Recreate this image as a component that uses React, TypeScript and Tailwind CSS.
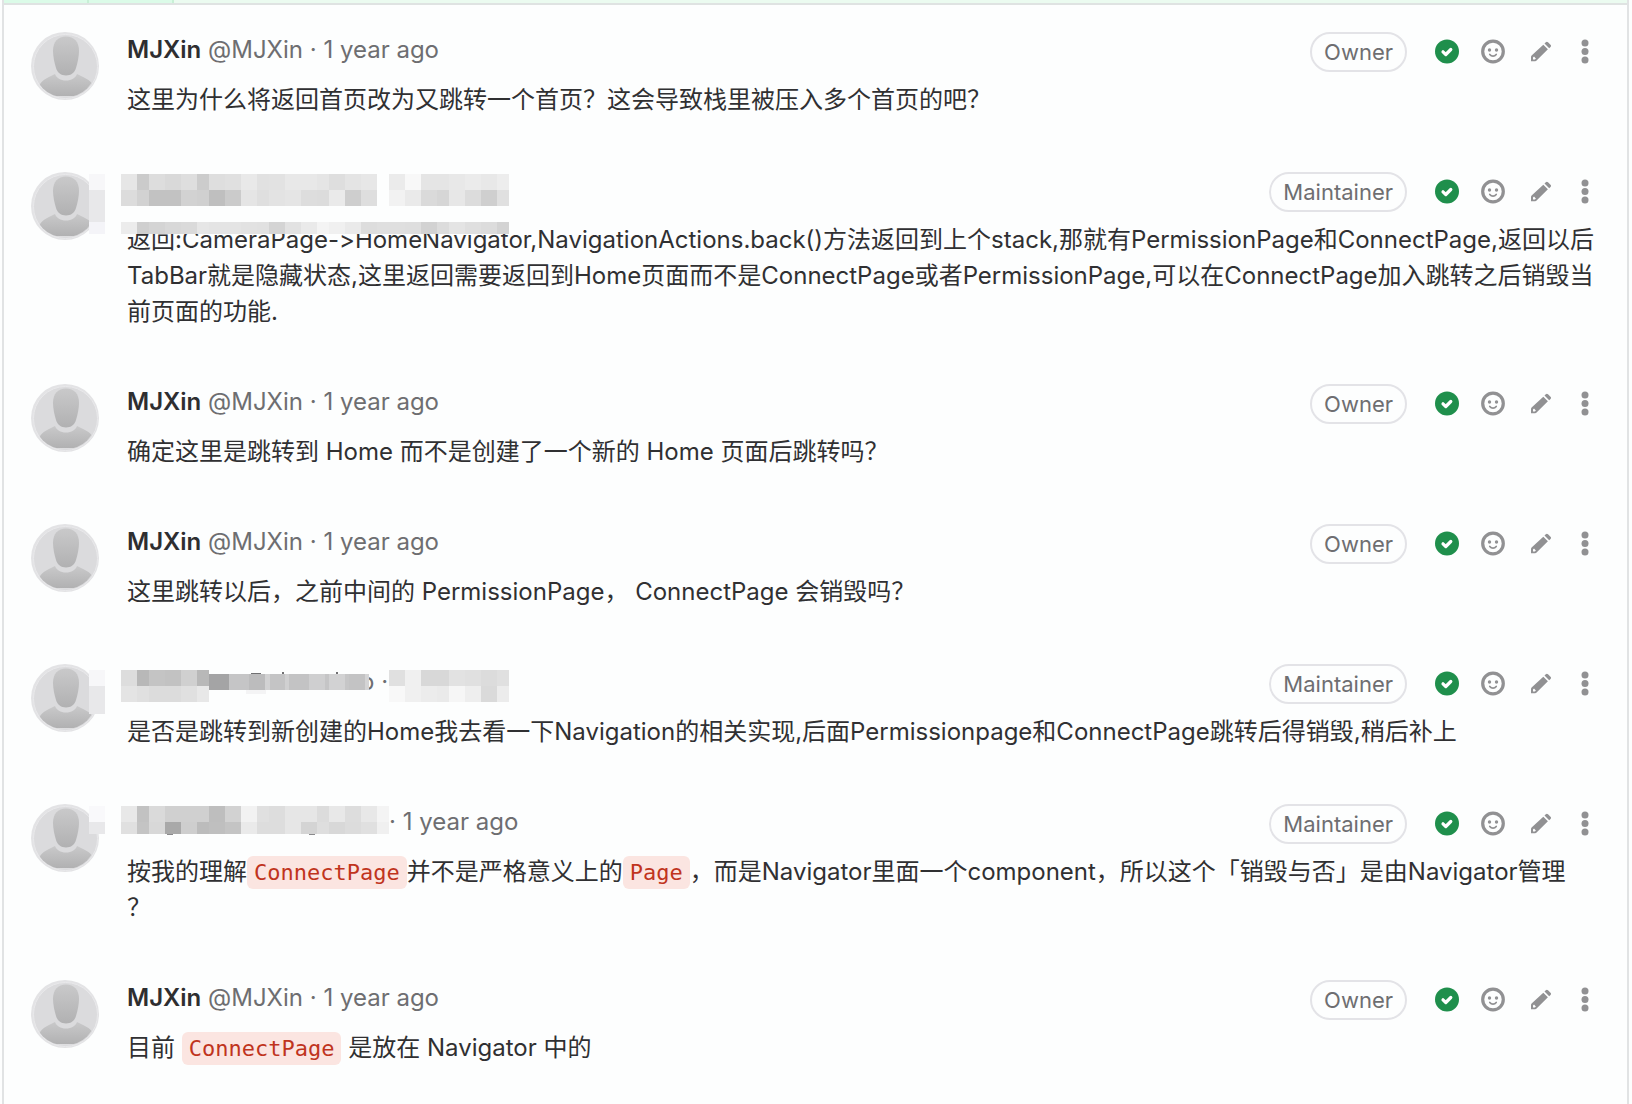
import type { ReactNode } from "react";

type Block = [x: number, y: number, w: number, h: number, fill: string];

/* Column edges shared by all pixelated strips, relative to the avatar's left edge. */
const LEFT_EDGES = [90, 106, 118, 134, 150, 166, 178, 194, 210, 226, 238, 254, 270, 286, 298, 314, 330, 346, 358];
const RIGHT_EDGES = [358, 374, 390, 406, 418, 434, 450, 466, 478];
const ALL_EDGES = [...LEFT_EDGES, ...RIGHT_EDGES.slice(1)];

function strip(edges: number[], y: number, h: number, greys: string): Block[] {
  return greys.split(" ").map((g, i): Block => [edges[i], y, edges[i + 1] - edges[i], h, `#${g}${g}${g}`]);
}

const MASK_A: Block[] = [
  [58, 2, 16, 16, "#f7f7f9"],
  [58, 18, 16, 32, "#e8e8ea"],
  [58, 50, 16, 12, "#f4f4f8"],
  ...strip(LEFT_EDGES, 2, 16, "e6 cb dd d9 de cc de e0 e9 e1 e2 e8 e8 e5 de e4 e7"),
  ...strip(LEFT_EDGES, 18, 16, "dc d2 c2 c2 d2 d0 bf cb e5 df e3 e5 dd dc ea ce de"),
  ...strip(RIGHT_EDGES, 2, 16, "eb f8 e5 e5 e8 eb e8 ed"),
  ...strip(RIGHT_EDGES, 18, 16, "f2 ea da d6 e7 dc cf e0"),
  [90, 34, 388, 16, "#fdfefe"],
  ...strip(ALL_EDGES, 50, 12, "ec cf d4 d8 da e6 e4 e4 e2 e1 d4 e2 ea f4 f0 ea dd df df de d2 dc e4 df dc d3"),
];

const MASK_B: Block[] = [
  [58, 6, 16, 16, "#f7f7f9"],
  [58, 22, 16, 28, "#e8e8ea"],
  ...strip(LEFT_EDGES, 6, 16, "dd b8 c4 c2 d0 b8"),
  ...strip(LEFT_EDGES, 22, 16, "e4 e0 dc dc e0 e8"),
  [178, 10, 20, 16, "#a4a4a5"],
  [198, 10, 20, 16, "#c5c5c6"],
  [218, 10, 16, 16, "#bcbcbd"],
  [234, 10, 5, 16, "#d2d2d3"],
  [239, 10, 15, 16, "#c4c4c5"],
  [254, 10, 4, 16, "#d0d0d1"],
  [258, 10, 20, 16, "#c3c3c4"],
  [278, 10, 16, 16, "#cfcfd0"],
  [294, 10, 4, 16, "#c5c5c6"],
  [298, 10, 16, 16, "#d2d2d3"],
  [314, 10, 4, 16, "#c6c6c7"],
  [318, 10, 16, 16, "#c3c3c4"],
  [334, 10, 4, 16, "#d4d4d5"],
  [215, 26, 20, 4, "#f4f4f5"],
  [220, 9, 10, 1, "#707072"],
  [251, 8, 2, 2, "#707072"],
  [305, 8, 2, 2, "#707072"],
  ...strip(RIGHT_EDGES, 6, 16, "e0 f0 d8 d8 e2 e0 dc e0"),
  ...strip(RIGHT_EDGES, 22, 16, "f8 f0 ec ea f6 ee da ec"),
];

const MASK_C: Block[] = [
  [58, 2, 16, 16, "#f9f9fb"],
  [58, 18, 16, 12, "#e8e8ea"],
  ...strip(LEFT_EDGES, 2, 16, "e8 c2 da d0 d0 d0 be d2 f2 e0 dd e6 e6 dc e8 dd e8 f4"),
  ...strip(LEFT_EDGES, 18, 12, "e0 c4 d8 a9 ce bc bf c4 ea dd dd e6 d4 de d8 dc e0 f0"),
  [136, 30, 6, 1, "#8a8a8c"],
  [278, 30, 6, 1, "#8a8a8c"],
];

function Mask({ blocks }: { blocks: Block[] }) {
  return (
    <svg
      aria-hidden="true"
      className="pointer-events-none absolute top-0 left-0"
      width="480"
      height="64"
      viewBox="0 0 480 64"
      shapeRendering="crispEdges"
    >
      {blocks.map(([x, y, w, h, fill], i) => (
        <rect key={i} x={x} y={y} width={w} height={h} fill={fill} />
      ))}
    </svg>
  );
}

function Avatar() {
  return (
    <svg className="size-[68px] shrink-0" viewBox="0 0 68 68" role="img" aria-label="avatar">
      <defs>
        <linearGradient id="figure" x1="0" y1="0" x2="0" y2="1">
          <stop offset="0" stopColor="#c9c9ca" />
          <stop offset="1" stopColor="#b1b1b2" />
        </linearGradient>
        <clipPath id="disc">
          <circle cx="34" cy="34" r="31.5" />
        </clipPath>
      </defs>
      <circle cx="34" cy="34" r="34" fill="#e3e3e5" />
      <circle cx="34.5" cy="34.5" r="32" fill="#dbdbdd" stroke="#e9e9eb" strokeWidth="1" />
      <g clipPath="url(#disc)">
        <path d="M9 53c0-3 5-6.500 15-11 1.500 4 5.500 6.500 11 6.500S44.500 46 46 42c10 4.500 15.500 8 15.500 11v11H9z" fill="url(#figure)" />
        <rect x="0" y="64" width="68" height="4" fill="#dedee0" />
      </g>
      <path
        d="M35 4.500c8 0 13 5.500 13 14 0 6-1.500 12.500-3 17.500-1.500 4.800-5 7.500-10 7.500s-8.500-2.700-10-7.500c-1.500-5-3-11.500-3-17.500 0-8.500 5-14 13-14z"
        fill="url(#figure)"
      />
    </svg>
  );
}

function IconButton({ label, children }: { label: string; children: ReactNode }) {
  return (
    <button type="button" aria-label={label} className="size-7 text-[#919193]">
      <svg className="size-7" viewBox="0 0 28 28" fill="currentColor" aria-hidden="true">
        {children}
      </svg>
    </button>
  );
}

function Actions({ role }: { role: string }) {
  return (
    <div className="flex h-10 shrink-0 items-center gap-[18px]">
      <span className="mr-2 flex h-10 items-center rounded-full border-2 border-[#e3e3e7] px-3 text-[22px] text-[#6e6e71]">
        {role}
      </span>
      <IconButton label="Resolved">
        <circle cx="14" cy="13.500" r="12" fill="#1f8f4c" />
        <path d="M10 13.800l2.800 2.700 5-5" fill="none" stroke="#fff" strokeWidth="3.200" strokeLinecap="round" strokeLinejoin="round" />
      </IconButton>
      <IconButton label="Add reaction">
        <circle cx="14" cy="13.500" r="10.300" fill="none" stroke="currentColor" strokeWidth="3.200" />
        <circle cx="10.500" cy="12" r="1.700" />
        <circle cx="17.500" cy="12" r="1.700" />
        <path d="M10.800 16.500c1.700 2.200 4.700 2.200 6.400 0" fill="none" stroke="currentColor" strokeWidth="1.700" strokeLinecap="round" />
      </IconButton>
      <IconButton label="Edit">
        <path
          fillRule="evenodd"
          d="M18.300 6.700l4.600 4.600L11.600 22.600c-.4.400-.9.600-1.500.6H6v-4.100c0-.6.200-1.100.6-1.500zM8 19.600v1.900h1.900l1-1-1.900-1.900z"
        />
        <path d="M19.500 5.500l1.300-1.300c.7-.7 1.500-.7 2.200 0l2.500 2.500c.7.700.7 1.500 0 2.200l-1.300 1.300z" />
      </IconButton>
      <IconButton label="More actions">
        <circle cx="14" cy="5" r="3.500" />
        <circle cx="14" cy="13.500" r="3.500" />
        <circle cx="14" cy="22" r="3.500" />
      </IconButton>
    </div>
  );
}

function Code({ children }: { children: ReactNode }) {
  return (
    <code className="rounded-md bg-[#fbe5e1] px-[7px] py-1 font-['DejaVu_Sans_Mono',monospace] text-[22px] leading-6 text-[#c0341d]">
      {children}
    </code>
  );
}

function MJXin() {
  return (
    <>
      <a href="#mjxin" className="font-semibold text-[#2e2e30]">MJXin</a>{" "}
      <a href="#mjxin">@MJXin</a> · <time>1 year ago</time>
    </>
  );
}

type NoteData = { role: string; head: ReactNode; body: ReactNode; mask?: Block[] };

const NOTES: NoteData[] = [
  { role: "Owner", head: <MJXin />, body: "这里为什么将返回首页改为又跳转一个首页？这会导致栈里被压入多个首页的吧？" },
  {
    role: "Maintainer",
    head: null,
    mask: MASK_A,
    body: "返回:CameraPage->HomeNavigator,NavigationActions.back()方法返回到上个stack,那就有PermissionPage和ConnectPage,返回以后TabBar就是隐藏状态,这里返回需要返回到Home页面而不是ConnectPage或者PermissionPage,可以在ConnectPage加入跳转之后销毁当前页面的功能.",
  },
  { role: "Owner", head: <MJXin />, body: "确定这里是跳转到 Home 而不是创建了一个新的 Home 页面后跳转吗？" },
  { role: "Owner", head: <MJXin />, body: "这里跳转以后，之前中间的 PermissionPage， ConnectPage 会销毁吗？" },
  {
    role: "Maintainer",
    head: <span className="ml-[233px]">o ·</span>,
    mask: MASK_B,
    body: "是否是跳转到新创建的Home我去看一下Navigation的相关实现,后面Permissionpage和ConnectPage跳转后得销毁,稍后补上",
  },
  {
    role: "Maintainer",
    head: <span className="ml-[262px]">· <time>1 year ago</time></span>,
    mask: MASK_C,
    body: (
      <>
        按我的理解<Code>ConnectPage</Code>并不是严格意义上的<Code>Page</Code>，而是Navigator里面一个component，所以这个「销毁与否」是由Navigator管理
        <br />？
      </>
    ),
  },
  { role: "Owner", head: <MJXin />, body: <>目前 <Code>ConnectPage</Code> 是放在 Navigator 中的</> },
];

function Note({ role, head, body, mask }: NoteData) {
  return (
    <li className="relative flex gap-7 pb-[54px]">
      <Avatar />
      <div className="min-w-0 flex-1">
        <div className="flex h-10 items-start justify-between">
          <div className="text-[#6e6e71]">{head}</div>
          <Actions role={role} />
        </div>
        <p className="mt-2.5">{body}</p>
      </div>
      {mask && <Mask blocks={mask} />}
    </li>
  );
}

export default function App() {
  return (
    <main
      lang="zh-CN"
      className="min-h-screen bg-[#fdfefe] pr-[3px] pl-0.5 font-['Inter','Noto_Sans_CJK_SC',sans-serif] text-[24px] leading-9 text-[#303032] [font-feature-settings:'calt'_0]"
    >
      <div className="min-h-screen border-x-2 border-[#e1e3e4]">
        <div className="flex h-[5px] border-b-2 border-[#dfe3e2] bg-[#ebfbf0]">
          <div className="w-[85px] border-r-2 border-[#c8f0d6] bg-[#dbfbe8]" />
          <div className="w-[85px] border-r-2 border-[#c8f0d6] bg-[#dbfbe8]" />
        </div>
        <ul className="pt-[27px] pr-7 pl-[27px]">
          {NOTES.map((note, i) => (
            <Note key={i} {...note} />
          ))}
        </ul>
      </div>
    </main>
  );
}
